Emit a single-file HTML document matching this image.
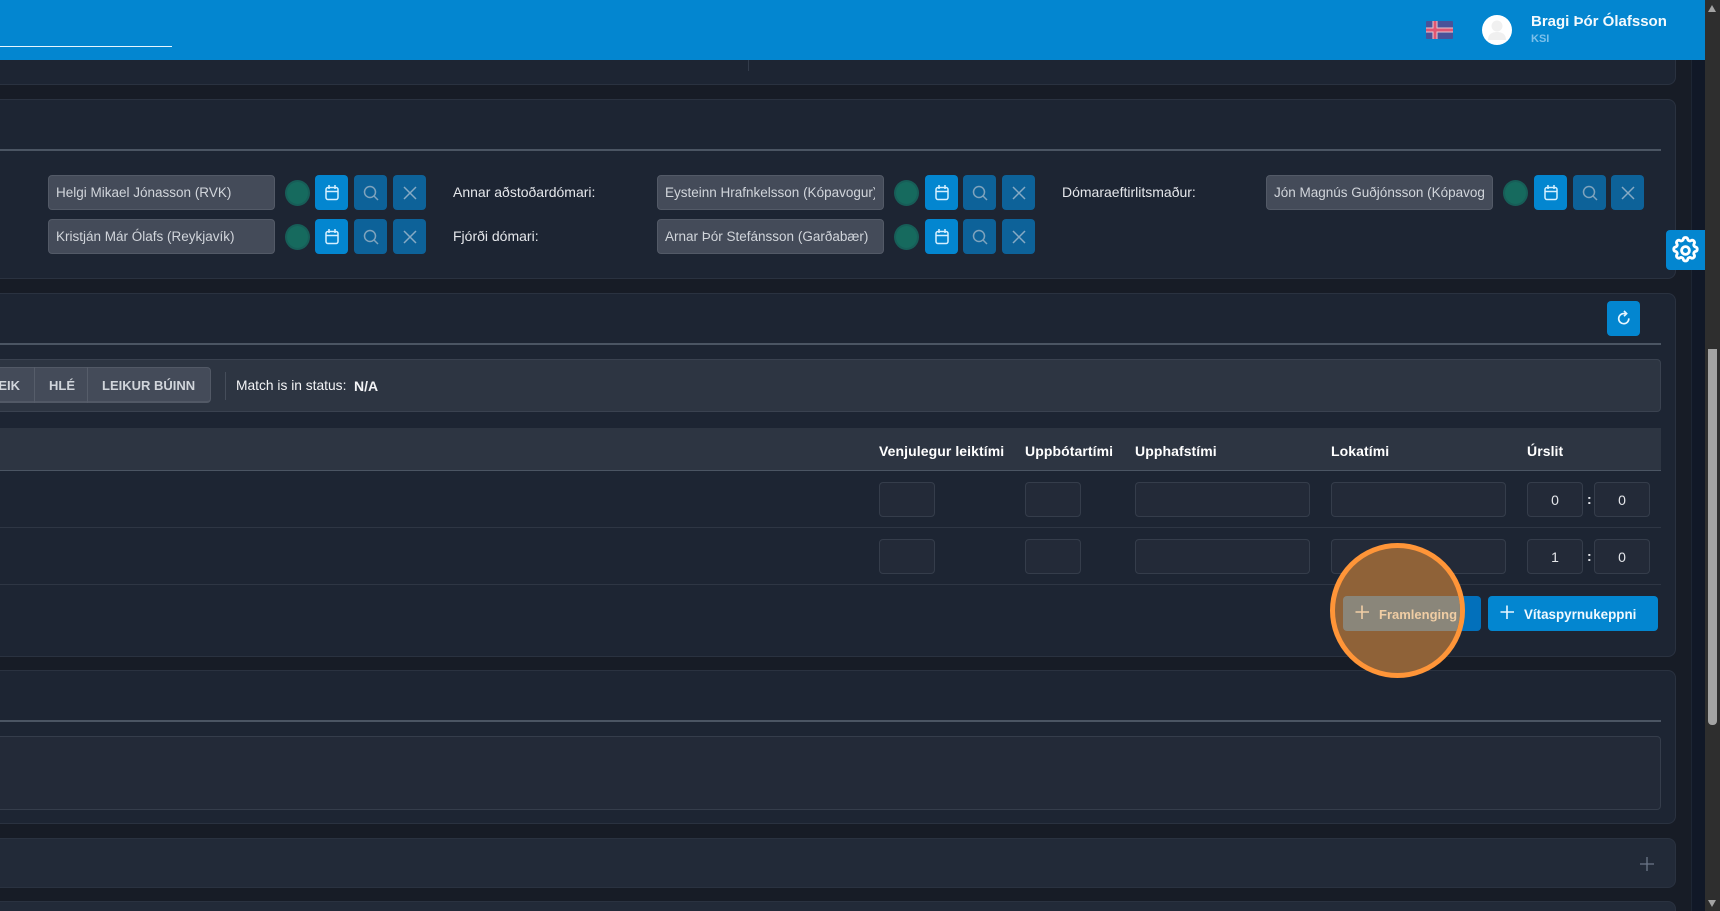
<!DOCTYPE html>
<html lang="is">
<head>
<meta charset="utf-8">
<title>Match</title>
<style>
html,body{margin:0;padding:0;width:1720px;height:911px;overflow:hidden;background:#171c26;font-family:"Liberation Sans",sans-serif;color:#e5e7eb}
*{box-sizing:border-box}
#root{position:relative;width:1720px;height:911px;overflow:hidden;contain:paint}
.a{position:absolute}
.panel{position:absolute;left:-10px;width:1686px;background:#1d2533;border:1px solid #2a3240;border-radius:8px}
.hr{position:absolute;left:0;width:1661px;height:2px;background:#4b5563}
.inp{position:absolute;width:227px;height:35px;background:#444b59;border:1px solid #535a67;border-radius:4px;color:#d1d5db;font-size:13.5px;line-height:33px;padding-left:7px;white-space:nowrap;overflow:hidden}
.inp span{display:block;width:210px;overflow:hidden}
.dot{position:absolute;width:25px;height:26px;border-radius:50%;background:#166a5e;border:2px solid #175e58}
.btn{position:absolute;width:33px;height:35px;border-radius:4px;background:#0386d0;display:flex;align-items:center;justify-content:center}
.dim{background:#0d6299}
.lab{position:absolute;font-size:14px;color:#e5e7eb;line-height:18px;white-space:nowrap}
.th{position:absolute;top:442px;font-size:14px;letter-spacing:.08px;font-weight:bold;color:#fff;line-height:18px;white-space:nowrap}
.cell{position:absolute;height:35px;background:#232a38;border:1px solid #353d4b;border-radius:4px;text-align:center;font-size:14px;line-height:35px;color:#e5e7eb}
.line{position:absolute;left:0;width:1661px;height:1px;background:#2e3644}
svg{display:block}
</style>
</head>
<body>
<div id="root">
<div class="a" style="left:1691px;top:0;width:14px;height:911px;background:#111827;border-left:1px solid #1d2533"></div>

<!-- panels -->
<div class="panel" style="top:40px;height:45px"></div>
<div class="a" style="left:748px;top:60px;width:1px;height:11px;background:#333c4b"></div>

<div class="panel" style="top:99px;height:180px"></div>
<div class="hr" style="top:149px"></div>

<!-- referee row 1 -->
<div class="inp" style="left:48px;top:175px"><span>Helgi Mikael Jónasson (RVK)</span></div>
<div class="dot" style="left:285px;top:180px"></div>
<div class="btn" style="left:315px;top:175px"><svg width="16" height="17" viewBox="0 0 16 17" fill="none" stroke="#d6f0ff" stroke-width="1.5"><rect x="2" y="3.500" width="12" height="12" rx="2"/><path d="M2 7.500H14M5 1V5M11 1V5"/></svg></div>
<div class="btn dim" style="left:354px;top:175px"><svg width="16" height="16" viewBox="0 0 16 16" fill="none" stroke="#7fa3bd" stroke-width="1.5"><circle cx="7" cy="7" r="5.500"/><path d="M11 11L15 15"/></svg></div>
<div class="btn dim" style="left:393px;top:175px"><svg width="16" height="16" viewBox="0 0 16 16" fill="none" stroke="#86aac4" stroke-width="1.500"><path d="M2 2L14 14M14 2L2 14"/></svg></div>

<div class="lab" style="left:453px;top:183px">Annar aðstoðardómari:</div>
<div class="inp" style="left:657px;top:175px"><span>Eysteinn Hrafnkelsson (Kópavogur)</span></div>
<div class="dot" style="left:894px;top:180px"></div>
<div class="btn" style="left:925px;top:175px"><svg width="16" height="17" viewBox="0 0 16 17" fill="none" stroke="#d6f0ff" stroke-width="1.5"><rect x="2" y="3.500" width="12" height="12" rx="2"/><path d="M2 7.500H14M5 1V5M11 1V5"/></svg></div>
<div class="btn dim" style="left:963px;top:175px"><svg width="16" height="16" viewBox="0 0 16 16" fill="none" stroke="#7fa3bd" stroke-width="1.5"><circle cx="7" cy="7" r="5.500"/><path d="M11 11L15 15"/></svg></div>
<div class="btn dim" style="left:1002px;top:175px"><svg width="16" height="16" viewBox="0 0 16 16" fill="none" stroke="#86aac4" stroke-width="1.500"><path d="M2 2L14 14M14 2L2 14"/></svg></div>

<div class="lab" style="left:1062px;top:183px">Dómaraeftirlitsmaður:</div>
<div class="inp" style="left:1266px;top:175px"><span>Jón Magnús Guðjónsson (Kópavogur)</span></div>
<div class="dot" style="left:1503px;top:180px"></div>
<div class="btn" style="left:1534px;top:175px"><svg width="16" height="17" viewBox="0 0 16 17" fill="none" stroke="#d6f0ff" stroke-width="1.5"><rect x="2" y="3.500" width="12" height="12" rx="2"/><path d="M2 7.500H14M5 1V5M11 1V5"/></svg></div>
<div class="btn dim" style="left:1573px;top:175px"><svg width="16" height="16" viewBox="0 0 16 16" fill="none" stroke="#7fa3bd" stroke-width="1.5"><circle cx="7" cy="7" r="5.500"/><path d="M11 11L15 15"/></svg></div>
<div class="btn dim" style="left:1611px;top:175px"><svg width="16" height="16" viewBox="0 0 16 16" fill="none" stroke="#86aac4" stroke-width="1.500"><path d="M2 2L14 14M14 2L2 14"/></svg></div>

<!-- referee row 2 -->
<div class="inp" style="left:48px;top:219px"><span>Kristján Már Ólafs (Reykjavík)</span></div>
<div class="dot" style="left:285px;top:224px"></div>
<div class="btn" style="left:315px;top:219px"><svg width="16" height="17" viewBox="0 0 16 17" fill="none" stroke="#d6f0ff" stroke-width="1.5"><rect x="2" y="3.500" width="12" height="12" rx="2"/><path d="M2 7.500H14M5 1V5M11 1V5"/></svg></div>
<div class="btn dim" style="left:354px;top:219px"><svg width="16" height="16" viewBox="0 0 16 16" fill="none" stroke="#7fa3bd" stroke-width="1.5"><circle cx="7" cy="7" r="5.500"/><path d="M11 11L15 15"/></svg></div>
<div class="btn dim" style="left:393px;top:219px"><svg width="16" height="16" viewBox="0 0 16 16" fill="none" stroke="#86aac4" stroke-width="1.500"><path d="M2 2L14 14M14 2L2 14"/></svg></div>

<div class="lab" style="left:453px;top:227px">Fjórði dómari:</div>
<div class="inp" style="left:657px;top:219px"><span>Arnar Þór Stefánsson (Garðabær)</span></div>
<div class="dot" style="left:894px;top:224px"></div>
<div class="btn" style="left:925px;top:219px"><svg width="16" height="17" viewBox="0 0 16 17" fill="none" stroke="#d6f0ff" stroke-width="1.5"><rect x="2" y="3.500" width="12" height="12" rx="2"/><path d="M2 7.500H14M5 1V5M11 1V5"/></svg></div>
<div class="btn dim" style="left:963px;top:219px"><svg width="16" height="16" viewBox="0 0 16 16" fill="none" stroke="#7fa3bd" stroke-width="1.5"><circle cx="7" cy="7" r="5.500"/><path d="M11 11L15 15"/></svg></div>
<div class="btn dim" style="left:1002px;top:219px"><svg width="16" height="16" viewBox="0 0 16 16" fill="none" stroke="#86aac4" stroke-width="1.500"><path d="M2 2L14 14M14 2L2 14"/></svg></div>

<!-- match panel -->
<div class="panel" style="top:293px;height:364px"></div>
<div class="hr" style="top:343px"></div>
<div class="btn" style="left:1607px;top:301px"><svg width="14" height="15" viewBox="0 0 16 17" fill="none" stroke="#e8f6ff" stroke-width="1.900" style="margin-top:-2px"><path d="M13.500 9.500A5.800 5.800 0 1 1 7.500 4H10"/><path d="M8 1L11 4L8 7"/></svg></div>

<!-- status bar -->
<div class="a" style="left:-10px;top:359px;width:1671px;height:53px;background:#2d3542;border:1px solid #3a4250;border-radius:4px"></div>
<div class="a" style="left:-10px;top:367px;width:221px;height:36px;background:#444b59;border:1px solid #525966;border-bottom-width:2px;border-radius:4px"></div>
<div class="a" style="left:34px;top:367px;width:1px;height:36px;background:#565d6a"></div>
<div class="a" style="left:87px;top:367px;width:1px;height:36px;background:#565d6a"></div>
<div class="a" style="left:0;top:367px;width:20px;height:36px;overflow:hidden;font-size:13px;font-weight:bold;color:#d1d5db;line-height:37px;direction:rtl;white-space:nowrap">EIK</div>
<div class="a" style="left:49px;top:367px;font-size:13px;font-weight:bold;color:#d1d5db;line-height:37px">HLÉ</div>
<div class="a" style="left:102px;top:367px;font-size:13px;font-weight:bold;color:#d1d5db;line-height:37px;white-space:nowrap">LEIKUR BÚINN</div>
<div class="a" style="left:225px;top:372px;width:1px;height:28px;background:#454d5a"></div>
<div class="a" style="left:236px;top:367px;font-size:13.800px;color:#f3f4f6;line-height:37px;white-space:nowrap">Match is in status:</div>
<div class="a" style="left:354px;top:368px;font-size:14px;font-weight:bold;color:#f3f4f6;line-height:37px">N/A</div>

<!-- table -->
<div class="a" style="left:0;top:428px;width:1661px;height:43px;background:#2d3542;border-bottom:1px solid #4b5563"></div>
<div class="th" style="left:879px">Venjulegur leiktími</div>
<div class="th" style="left:1025px">Uppbótartími</div>
<div class="th" style="left:1135px">Upphafstími</div>
<div class="th" style="left:1331px">Lokatími</div>
<div class="th" style="left:1527px">Úrslit</div>

<div class="cell" style="left:879px;top:482px;width:56px"></div>
<div class="cell" style="left:1025px;top:482px;width:56px"></div>
<div class="cell" style="left:1135px;top:482px;width:175px"></div>
<div class="cell" style="left:1331px;top:482px;width:175px"></div>
<div class="cell" style="left:1527px;top:482px;width:56px">0</div>
<div class="a" style="left:1587px;top:482px;font-size:14px;line-height:35px;font-weight:bold">:</div>
<div class="cell" style="left:1594px;top:482px;width:56px">0</div>
<div class="line" style="top:527px"></div>

<div class="cell" style="left:879px;top:539px;width:56px"></div>
<div class="cell" style="left:1025px;top:539px;width:56px"></div>
<div class="cell" style="left:1135px;top:539px;width:175px"></div>
<div class="cell" style="left:1331px;top:539px;width:175px"></div>
<div class="cell" style="left:1527px;top:539px;width:56px">1</div>
<div class="a" style="left:1587px;top:539px;font-size:14px;line-height:35px;font-weight:bold">:</div>
<div class="cell" style="left:1594px;top:539px;width:56px">0</div>
<div class="line" style="top:584px"></div>

<!-- action buttons -->
<div class="a" style="left:1343px;top:596px;width:138px;height:35px;background:#0270bb;border-radius:4px"></div>
<div class="a" style="left:1488px;top:596px;width:170px;height:35px;background:#0386d0;border-radius:4px"></div>
<div class="a" style="left:1499px;top:604px"><svg width="16" height="16" viewBox="0 0 16 16" fill="none" stroke="#e8f6ff" stroke-width="1.600"><path d="M8 1.500V15M1.500 8H15"/></svg></div>
<div class="a" style="left:1524px;top:597px;font-size:13.400px;font-weight:bold;color:#f0f9ff;line-height:36px;white-space:nowrap">Vítaspyrnukeppni</div>

<!-- lower panels -->
<div class="panel" style="top:670px;height:154px"></div>
<div class="hr" style="top:720px"></div>
<div class="a" style="left:-10px;top:736px;width:1671px;height:74px;background:#232a38;border:1px solid #353d4b;border-radius:4px"></div>
<div class="panel" style="top:838px;height:50px;background:#222a38"></div>
<div class="a" style="left:1640px;top:857px"><svg width="14" height="14" viewBox="0 0 15 15" fill="none" stroke="#6b7688" stroke-width="1.400"><path d="M7.500 0V15M0 7.500H15"/></svg></div>
<div class="panel" style="top:901px;height:30px;background:#222a38"></div>

<!-- highlight circle -->
<div class="a" style="left:1330px;top:543px;width:135px;height:135px;border-radius:50%;background:#8f6238;border:5px solid #ff9538;overflow:hidden">
  <div class="a" style="left:8px;top:48px;width:138px;height:35px;background:#8a867a;border-radius:4px"></div>
  <div class="a" style="left:19px;top:56px"><svg width="16" height="16" viewBox="0 0 16 16" fill="none" stroke="#f2cfa6" stroke-width="1.600"><path d="M8 1.500V15M1.500 8H15"/></svg></div>
  <div class="a" style="left:44px;top:49px;font-size:13px;font-weight:bold;color:#f0cda4;line-height:36px;white-space:nowrap">Framlenging</div>
</div>

<!-- gear tab -->
<div class="a" style="left:1666px;top:230px;width:39px;height:40px;background:#0386d0;border-radius:4px 0 0 4px;display:flex;align-items:center;justify-content:center">
<svg width="31" height="31" viewBox="0 0 24 24" fill="none" stroke="#fff" stroke-width="2.200" stroke-linejoin="round"><path d="M10.300 3.200c.4-1.700 3-1.700 3.400 0a1.700 1.700 0 0 0 2.600 1.100c1.500-.9 3.300.9 2.400 2.400a1.700 1.700 0 0 0 1.100 2.600c1.700.4 1.700 3 0 3.400a1.700 1.700 0 0 0-1.100 2.600c.9 1.500-.9 3.300-2.400 2.400a1.700 1.700 0 0 0-2.600 1.100c-.4 1.700-3 1.700-3.400 0a1.700 1.700 0 0 0-2.600-1.100c-1.500.9-3.300-.9-2.400-2.400a1.700 1.700 0 0 0-1.100-2.600c-1.700-.4-1.700-3 0-3.400a1.700 1.700 0 0 0 1.100-2.600c-.9-1.500.9-3.300 2.400-2.400a1.700 1.700 0 0 0 2.600-1.100z"/><circle cx="12" cy="12" r="3"/></svg>
</div>

<!-- header -->
<div class="a" style="left:0;top:0;width:1705px;height:60px;background:#0386d0"></div>
<div class="a" style="left:0;top:46px;width:172px;height:1px;background:#e6f6ff"></div>
<div class="a" style="left:1426px;top:21px"><svg width="27" height="18" viewBox="0 0 27 18"><rect width="27" height="18" rx="1" fill="#4a5299"/><path d="M0 9H27M9 0V18" stroke="#e4c8d4" stroke-width="5"/><path d="M0 9H27M9 0V18" stroke="#df5672" stroke-width="3"/></svg></div>
<div class="a" style="left:1482px;top:15px;width:30px;height:30px;border-radius:50%;background:#fff;overflow:hidden"><svg width="30" height="30" viewBox="0 0 30 30"><circle cx="15" cy="11" r="5.500" fill="#f0f0f0"/><path d="M6 25c0-6 4-8 9-8s9 2 9 8z" fill="#f0f0f0"/></svg></div>
<div class="a" style="left:1531px;top:12px;font-size:15px;font-weight:bold;color:#f3f9fd;line-height:20px;white-space:nowrap">Bragi Þór Ólafsson</div>
<div class="a" style="left:1531px;top:32px;font-size:11px;font-weight:bold;color:#7cc0ea;line-height:15px">KSI</div>

<!-- scrollbar -->
<div class="a" style="left:1705px;top:0;width:15px;height:911px;background:#2e2e2e"></div>
<div class="a" style="left:1708px;top:349px;width:9px;height:376px;background:#a3a3a3;border-radius:0 0 4px 4px"></div>
<div class="a" style="left:1708px;top:5px;width:0;height:0;border-left:4.500px solid transparent;border-right:4.500px solid transparent;border-bottom:7px solid #a3a3a3"></div>
<div class="a" style="left:1708px;top:900px;width:0;height:0;border-left:4.500px solid transparent;border-right:4.500px solid transparent;border-top:7px solid #a3a3a3"></div>
</div>
</body>
</html>
